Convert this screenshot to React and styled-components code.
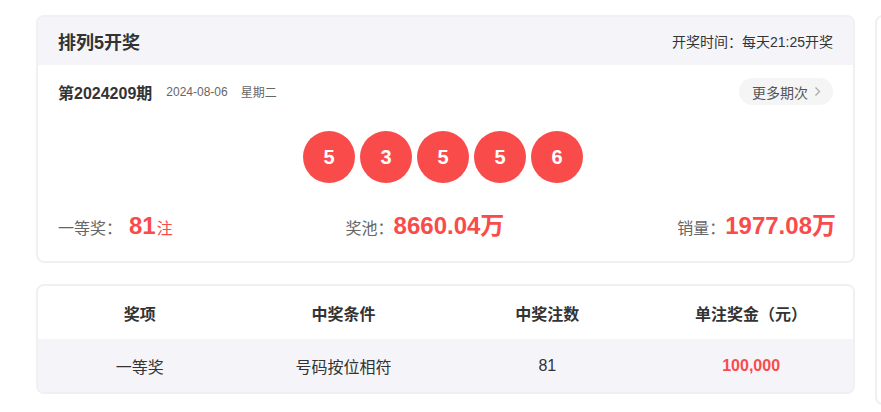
import styled, { createGlobalStyle } from "styled-components";

const GlobalStyle = createGlobalStyle`
  html, body {
    margin: 0;
    padding: 0;
    background: #fff;
    font-family: "Liberation Sans", "Noto Sans CJK SC", sans-serif;
    color: #333;
  }
`;

const RED = "#fa4b4b";

const Page = styled.div`
  display: flex;
  align-items: flex-start;
  gap: 20px;
  padding: 15px 0 0 36px;
  width: 881px;
  height: 412px;
  box-sizing: border-box;
  overflow: hidden;
`;

const Main = styled.div`
  width: 819px;
  flex-shrink: 0;
  display: flex;
  flex-direction: column;
  gap: 21px;
`;

const Sidebar = styled.div`
  width: 300px;
  height: 390px;
  flex-shrink: 0;
  border: 2px solid #f0f0f2;
  border-radius: 8px;
  box-sizing: border-box;
`;

const Card = styled.div`
  border: 2px solid #f0f0f2;
  border-radius: 8px;
  overflow: hidden;
  background: #fff;
`;

const CardHeader = styled.div`
  height: 48px;
  background: #f5f5f9;
  padding: 0 20px;
  display: flex;
  align-items: center;
  justify-content: space-between;
`;

const Title = styled.h2`
  margin: 0;
  font-size: 18px;
  font-weight: bold;
  color: #333;
`;

const DrawTime = styled.span`
  font-size: 14px;
  color: #333;
`;

const CardBody = styled.div`
  padding: 13px 20px 25px;
`;

const IssueRow = styled.div`
  height: 27px;
  display: flex;
  align-items: center;
  justify-content: space-between;
`;

const IssueInfo = styled.div`
  display: flex;
  align-items: center;
  gap: 13px;
`;

const IssueNo = styled.span`
  font-size: 16px;
  font-weight: bold;
  color: #333;
  margin-right: 1px;
`;

const Small = styled.span`
  font-size: 12px;
  color: #666;
`;

const MoreButton = styled.button`
  height: 27px;
  border: none;
  border-radius: 14px;
  background: #f5f5f5;
  padding: 0 12px 0 13px;
  display: flex;
  align-items: center;
  gap: 6px;
  font-family: inherit;
  font-size: 14px;
  color: #555;
  cursor: pointer;
`;

const Balls = styled.div`
  display: flex;
  justify-content: center;
  gap: 5px;
  margin-top: 26px;
  padding-right: 5px;
`;

const Ball = styled.span`
  width: 52px;
  height: 52px;
  border-radius: 50%;
  background: ${RED};
  color: #fff;
  font-size: 20px;
  font-weight: bold;
  display: flex;
  align-items: center;
  justify-content: center;
`;

const Stats = styled.div`
  display: flex;
  justify-content: space-between;
  align-items: baseline;
  margin-top: 23px;
  height: 30px;
  padding-right: 0;
  margin-right: -3px;
`;

const Stat = styled.div`
  display: flex;
  align-items: baseline;
`;

const Label = styled.span`
  font-size: 16px;
  color: #666;
  margin-right: ${(p) => p.$gap || 0}px;
`;

const Value = styled.span`
  font-size: 24px;
  font-weight: bold;
  color: ${RED};
`;

const Unit = styled.span`
  font-size: ${(p) => (p.$small ? 16 : 24)}px;
  font-weight: ${(p) => (p.$small ? "normal" : "bold")};
  color: ${RED};
  margin-left: ${(p) => (p.$small ? 1 : 0)}px;
`;

const Row = styled.div`
  display: grid;
  grid-template-columns: repeat(4, 1fr);
  height: 53px;
  align-items: center;
  background: ${(p) => (p.$alt ? "#f5f5f9" : "#fff")};
`;

const Cell = styled.div`
  text-align: center;
  font-size: 16px;
  font-weight: ${(p) => (p.$bold ? "bold" : "normal")};
  color: ${(p) => (p.$red ? RED : "#333")};
`;

const Chevron = () => (
  <svg width="7" height="11" viewBox="0 0 7 11" fill="none">
    <path d="M1.5 1.5L5.5 5.5L1.5 9.5" stroke="#aaa" strokeWidth="1.3" />
  </svg>
);

const numbers = [5, 3, 5, 5, 6];

export default function App() {
  return (
    <>
      <GlobalStyle />
      <Page>
        <Main>
          <Card>
            <CardHeader>
              <Title>排列5开奖</Title>
              <DrawTime>开奖时间：每天21:25开奖</DrawTime>
            </CardHeader>
            <CardBody>
              <IssueRow>
                <IssueInfo>
                  <IssueNo>第2024209期</IssueNo>
                  <Small>2024-08-06</Small>
                  <Small>星期二</Small>
                </IssueInfo>
                <MoreButton>
                  更多期次
                  <Chevron />
                </MoreButton>
              </IssueRow>
              <Balls>
                {numbers.map((n, i) => (
                  <Ball key={i}>{n}</Ball>
                ))}
              </Balls>
              <Stats>
                <Stat>
                  <Label $gap={7}>一等奖：</Label>
                  <Value>81</Value>
                  <Unit $small>注</Unit>
                </Stat>
                <Stat>
                  <Label>奖池：</Label>
                  <Value>8660.04</Value>
                  <Unit>万</Unit>
                </Stat>
                <Stat>
                  <Label>销量：</Label>
                  <Value>1977.08</Value>
                  <Unit>万</Unit>
                </Stat>
              </Stats>
            </CardBody>
          </Card>
          <Card>
            <Row>
              <Cell $bold>奖项</Cell>
              <Cell $bold>中奖条件</Cell>
              <Cell $bold>中奖注数</Cell>
              <Cell $bold>单注奖金（元）</Cell>
            </Row>
            <Row $alt>
              <Cell>一等奖</Cell>
              <Cell>号码按位相符</Cell>
              <Cell>81</Cell>
              <Cell $bold $red>100,000</Cell>
            </Row>
          </Card>
        </Main>
        <Sidebar />
      </Page>
    </>
  );
}
